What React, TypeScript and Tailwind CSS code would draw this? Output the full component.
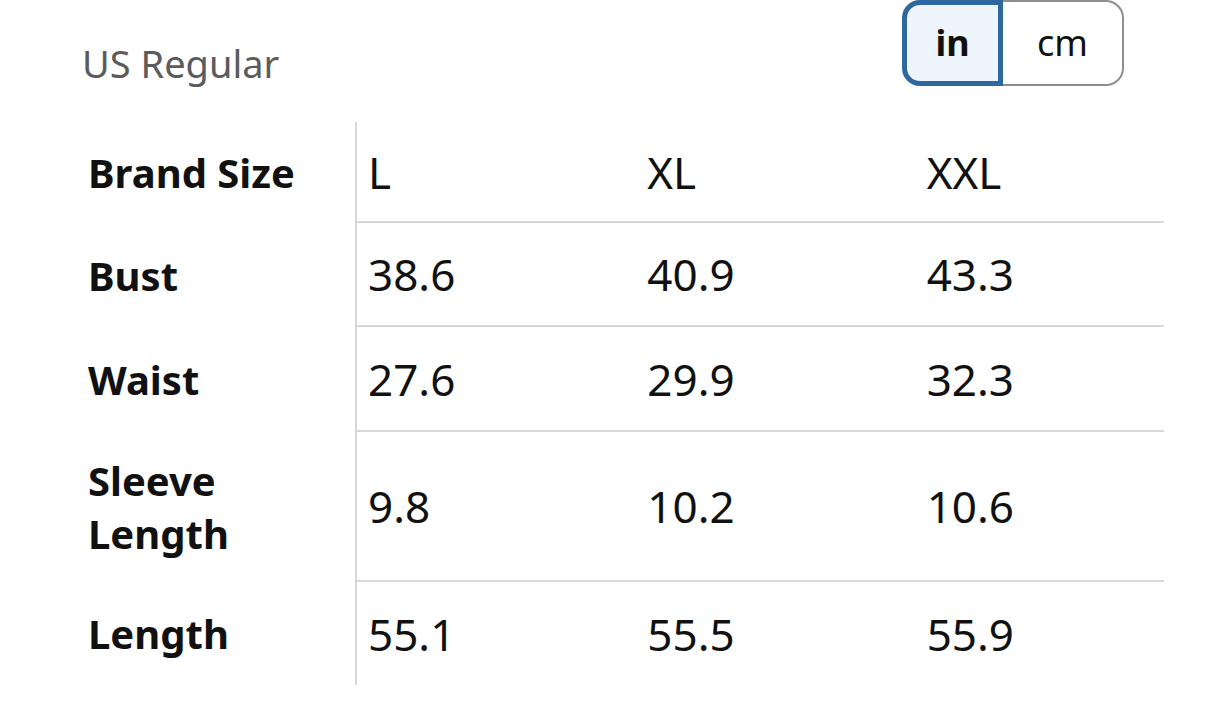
const rows = [
  { label: ["Brand Size"], values: ["L", "XL", "XXL"], h: "h-[101px]" },
  { label: ["Bust"], values: ["38.6", "40.9", "43.3"], h: "h-[104px]" },
  { label: ["Waist"], values: ["27.6", "29.9", "32.3"], h: "h-[105px]" },
  { label: ["Sleeve", "Length"], values: ["9.8", "10.2", "10.6"], h: "h-[150px]" },
  { label: ["Length"], values: ["55.1", "55.5", "55.9"], h: "h-[103px]" },
];

export default function App() {
  return (
    <div className="w-[1206px] h-[712px] bg-white text-[#111] overflow-hidden" style={{ fontFamily: '"Noto Sans", "Open Sans", sans-serif' }}>
      {/* Header */}
      <div className="flex items-start justify-between pl-[82px] pr-[82px]">
        <p className="mt-[41px] text-[38px] leading-[44px] text-[#5b5b5b]">US Regular</p>
        <div className="flex">
          <button className="w-[101px] h-[86px] border-[5px] border-[#2f67a0] rounded-l-[18px] bg-[#eef5fc] text-[36px] font-bold leading-none">
            in
          </button>
          <button className="w-[121px] h-[86px] border-2 border-l-0 border-[#8e8e8e] rounded-r-[18px] bg-white text-[36px] leading-none">
            cm
          </button>
        </div>
      </div>

      {/* Size table */}
      <div className="mt-[36px] pl-[75px]">
        {rows.map((row, i) => (
          <div key={i} className={`flex ${row.h}`}>
            <div className="w-[280px] pl-[13px] flex flex-col justify-center text-[40px] font-bold leading-[53px]">
              {row.label.map((l) => (
                <span key={l}>{l}</span>
              ))}
            </div>
            <div
              className={`flex items-center w-[809px] border-l-2 border-[#d8d8d8] ${
                i < rows.length - 1 ? "border-b-2" : ""
              }`}
            >
              {row.values.map((v, j) => (
                <div key={j} className={`${j < 2 ? "w-[280px]" : "w-[249px]"} pl-[11px] text-[44px] leading-none`}>
                  {v}
                </div>
              ))}
            </div>
          </div>
        ))}
      </div>
    </div>
  );
}
